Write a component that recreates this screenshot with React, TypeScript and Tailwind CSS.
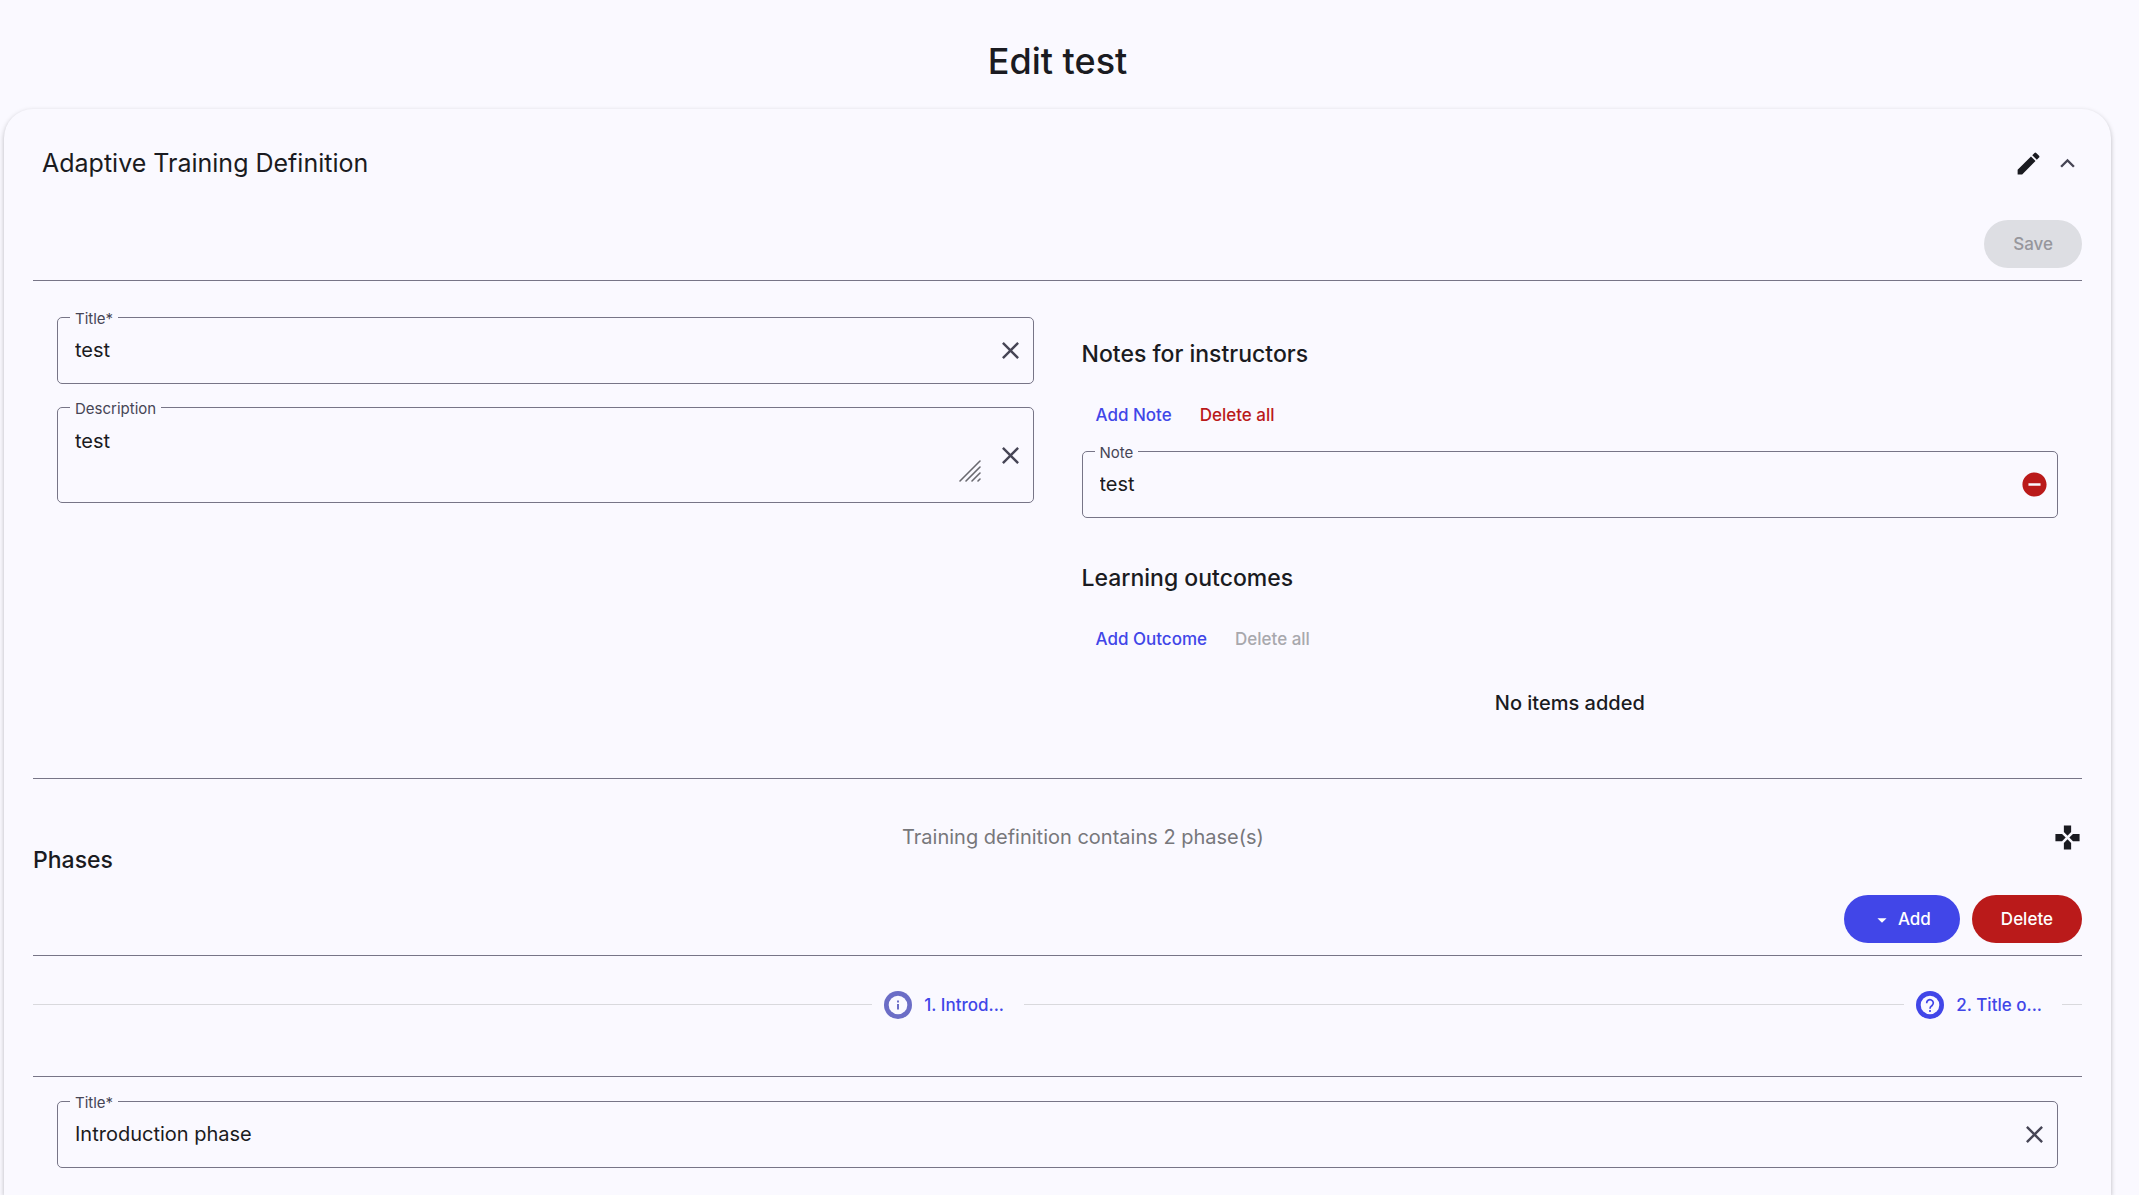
import React, { useId } from "react";

const ink = "text-[#1a1b21]";

function Icon({ d, className = "size-[29px]", viewBox = "0 0 24 24" }: { d: string; className?: string; viewBox?: string }) {
  return (
    <svg viewBox={viewBox} fill="currentColor" aria-hidden="true" className={`shrink-0 ${className}`}>
      <path d={d} />
    </svg>
  );
}

const icons = {
  edit: "M3 17.25V21h3.75L17.81 9.94l-3.75-3.75L3 17.25zM20.71 7.04a1 1 0 0 0 0-1.41l-2.34-2.34a1 1 0 0 0-1.41 0l-1.83 1.83 3.75 3.75 1.83-1.83z",
  collapse: "M480-529 296-345l-56-56 240-240 240 240-56 56-184-184Z",
  close: "M19 6.41 17.59 5 12 10.59 6.41 5 5 6.41 10.59 12 5 17.59 6.41 19 12 13.41 17.59 19 19 17.59 13.41 12z",
  remove: "M12 2C6.48 2 2 6.48 2 12s4.48 10 10 10 10-4.48 10-10S17.52 2 12 2zm5 11H7v-2h10v2z",
  gamepad: "M15 7.5V2H9v5.5l3 3 3-3zM7.5 9H2v6h5.5l3-3-3-3zM9 16.5V22h6v-5.5l-3-3-3 3zM16.5 9l-3 3 3 3H22V9h-5.5z",
  dropDown: "m7 10 5 5 5-5z",
};

function IconButton({ label, d, className = "text-[#464555]", viewBox }: { label: string; d: string; className?: string; viewBox?: string }) {
  return (
    <button type="button" aria-label={label} className={`flex shrink-0 items-center ${className}`}>
      <Icon d={d} viewBox={viewBox} />
    </button>
  );
}

function Field({ label, value, multiline, action }: { label: string; value: string; multiline?: boolean; action: React.ReactNode }) {
  const id = useId();
  const box = multiline ? "h-24" : "h-[67px]";
  return (
    <div className={`relative flex items-center rounded-[5px] border border-[#777587] pr-2 pl-[17px] ${box}`}>
      <label htmlFor={id} className="absolute -top-2 left-3 bg-[#faf9ff] px-[5px] text-[15px] leading-[18px] text-[#464555]">
        {label}
      </label>
      {multiline ? (
        <div className="flex min-w-0 flex-1 items-end self-stretch pt-[19px] pb-[19px]">
          <textarea id={id} defaultValue={value} className={`h-full min-w-0 flex-1 resize-none text-[20px] leading-[29px] outline-none ${ink}`} />
          <svg viewBox="0 0 24 24" className="mr-[14px] size-6 shrink-0" stroke="#69696f" strokeWidth="1.6" strokeLinecap="round" aria-hidden="true">
            <path d="M2 22 22 2M8 22 22 8M14 22l8-8M20 22l2-2" />
          </svg>
        </div>
      ) : (
        <input id={id} type="text" defaultValue={value} className={`min-w-0 flex-1 text-[20px] leading-[29px] outline-none ${ink}`} />
      )}
      {action}
    </div>
  );
}

function ListActions({ add, disabled }: { add: string; disabled?: boolean }) {
  return (
    <div className="flex h-12 items-center text-[17px] leading-6 font-medium">
      <button type="button" className="px-[14px] text-[#4146e8]">{add}</button>
      <button type="button" disabled={disabled} className="px-[14px] text-[#ba1a1a] disabled:text-[#a8a8ad]">Delete all</button>
    </div>
  );
}

function Divider() {
  return <hr className="border-t border-[#777587]" />;
}

function Line({ className }: { className: string }) {
  return <span className={`h-px bg-[#d9d9dd] ${className}`} />;
}

function StepBadge({ kind }: { kind: "info" | "help" }) {
  return (
    <svg viewBox="0 0 28 28" className="size-7 shrink-0" aria-hidden="true">
      <circle cx="14" cy="14" r="14" fill={kind === "info" ? "#6b6dc6" : "#4146e8"} />
      <circle cx="14" cy="14" r="9.3" fill="#faf9ff" />
      {kind === "info" ? (
        <g fill="#6b6dc6">
          <rect x="13" y="9.5" width="2" height="2" />
          <rect x="13" y="13" width="2" height="5.5" />
        </g>
      ) : (
        <g stroke="#4146e8" strokeWidth="1.7" fill="none">
          <path d="M10.7 12.2a3.3 3.3 0 1 1 5.4 2.3c-1 .9-2.1 1.400-2.100 3.200" />
          <path d="M14 19v2" />
        </g>
      )}
    </svg>
  );
}

export default function App() {
  return (
    <main className={`flex min-h-screen flex-col bg-[#faf9ff] font-['Inter',sans-serif] ${ink}`}>
      <h1 className="pt-[37px] pr-6 pb-6 text-center text-[36px] leading-[48px] font-medium">Edit test</h1>
      <section className="mr-7 ml-1 flex-1 rounded-t-[29px] px-[29px] pb-6 shadow-[0_2px_5px_rgba(0,0,0,0.26)]">
        <header className="flex h-[108px] items-center justify-between pl-[9px]">
          <h2 className="text-[25px] leading-9">Adaptive Training Definition</h2>
          <div className="flex items-center gap-[10px]">
            <IconButton label="Edit" d={icons.edit} className={ink} />
            <IconButton label="Collapse" d={icons.collapse} viewBox="0 -960 960 960" />
          </div>
        </header>
        <div className="flex justify-end pt-[3px] pb-3">
          <button type="button" disabled className="h-12 rounded-full bg-[#dddee3] px-[29px] pt-px text-[17px] font-medium text-[#96969c]">Save</button>
        </div>
        <Divider />

        <div className="grid grid-cols-2 gap-12 px-6">
          <div className="flex flex-col gap-[23px] pt-9">
            <Field label="Title*" value="test" action={<IconButton label="Clear title" d={icons.close} />} />
            <Field label="Description" value="test" multiline action={<IconButton label="Clear description" d={icons.close} />} />
          </div>
          <div className="flex flex-col pt-[59px]">
            <h3 className="text-[23px] leading-[29px] font-medium">Notes for instructors</h3>
            <div className="pt-[22px] pb-3"><ListActions add="Add Note" /></div>
            <Field label="Note" value="test" action={<IconButton label="Remove note" d={icons.remove} className="text-[#ba1a1a]" />} />
            <h3 className="pt-[46px] text-[23px] leading-[29px] font-medium">Learning outcomes</h3>
            <div className="pt-[22px]"><ListActions add="Add Outcome" disabled /></div>
            <p className="pt-[26px] pb-[60px] text-center text-[20px] leading-[29px] font-medium">No items added</p>
          </div>
        </div>
        <Divider />

        <div className="flex h-[116px] items-center">
          <h3 className="pt-[46px] text-[23px] leading-[29px] font-medium">Phases</h3>
          <p className="flex-1 text-center text-[20px] leading-[29px] text-[#77777b]">Training definition contains 2 phase(s)</p>
          <IconButton label="Game controls" d={icons.gamepad} className={ink} />
        </div>
        <div className="flex justify-end gap-3 pb-3 text-[17px] font-medium text-white">
          <button type="button" className="flex h-12 items-center gap-[5px] rounded-full bg-[#4146e8] pt-px pr-[29px] pl-[27px]">
            <Icon d={icons.dropDown} className="size-[22px]" />
            Add
          </button>
          <button type="button" className="h-12 rounded-full bg-[#ba1a1a] px-[29px] pt-px">Delete</button>
        </div>
        <Divider />

        <nav aria-label="Phases" className="flex h-[97px] items-center text-[17px] leading-6 font-medium text-[#4146e8]">
          <Line className="flex-[839]" />
          <button type="button" className="mr-5 ml-3 flex items-center gap-3"><StepBadge kind="info" />1. Introd...</button>
          <Line className="flex-[880]" />
          <button type="button" className="mr-5 ml-3 flex items-center gap-3"><StepBadge kind="help" />2. Title o...</button>
          <Line className="w-5" />
        </nav>
        <div className="h-[23px]" />
        <Divider />
        <div className="px-6 pt-6">
          <Field label="Title*" value="Introduction phase" action={<IconButton label="Clear phase title" d={icons.close} />} />
        </div>
      </section>
    </main>
  );
}
